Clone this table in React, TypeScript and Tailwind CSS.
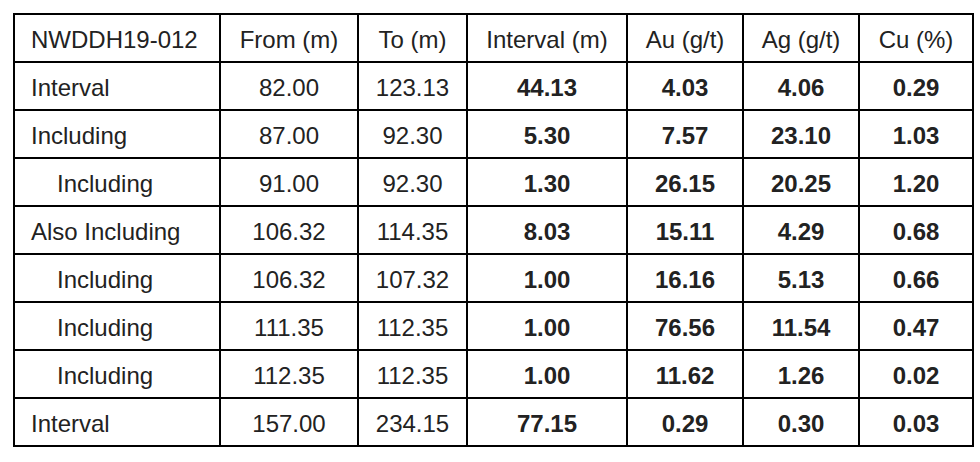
const rows: { label: string; indent?: boolean; from: string; to: string; interval: string; au: string; ag: string; cu: string }[] = [
  { label: "Interval", from: "82.00", to: "123.13", interval: "44.13", au: "4.03", ag: "4.06", cu: "0.29" },
  { label: "Including", from: "87.00", to: "92.30", interval: "5.30", au: "7.57", ag: "23.10", cu: "1.03" },
  { label: "Including", indent: true, from: "91.00", to: "92.30", interval: "1.30", au: "26.15", ag: "20.25", cu: "1.20" },
  { label: "Also Including", from: "106.32", to: "114.35", interval: "8.03", au: "15.11", ag: "4.29", cu: "0.68" },
  { label: "Including", indent: true, from: "106.32", to: "107.32", interval: "1.00", au: "16.16", ag: "5.13", cu: "0.66" },
  { label: "Including", indent: true, from: "111.35", to: "112.35", interval: "1.00", au: "76.56", ag: "11.54", cu: "0.47" },
  { label: "Including", indent: true, from: "112.35", to: "112.35", interval: "1.00", au: "11.62", ag: "1.26", cu: "0.02" },
  { label: "Interval", from: "157.00", to: "234.15", interval: "77.15", au: "0.29", ag: "0.30", cu: "0.03" },
];

const headers = ["From (m)", "To (m)", "Interval (m)", "Au (g/t)", "Ag (g/t)", "Cu (%)"];

export default function App() {
  const cell = "border-2 border-black text-center pt-[3px]";
  return (
    <div className="bg-white w-[980px] h-[462px] pt-[13px] pl-[13px] font-['Liberation_Sans',Arial,sans-serif] text-[24px] leading-[28px] text-[#222]">
      <table className="table-fixed border-collapse w-[959px]">
        <colgroup>
          <col className="w-[206px]" />
          <col className="w-[138px]" />
          <col className="w-[109px]" />
          <col className="w-[160px]" />
          <col className="w-[116px]" />
          <col className="w-[116px]" />
          <col className="w-[114px]" />
        </colgroup>
        <tbody>
          <tr className="h-[48px]">
            <td className="border-2 border-black pl-[16px] pt-[3px] text-left">NWDDH19-012</td>
            {headers.map((h) => (
              <td key={h} className={cell}>
                {h}
              </td>
            ))}
          </tr>
          {rows.map((r, i) => (
            <tr key={i} className="h-[48px]">
              <td className={`border-2 border-black text-left pt-[3px] ${r.indent ? "pl-[42px]" : "pl-[16px]"}`}>{r.label}</td>
              <td className={cell}>{r.from}</td>
              <td className={cell}>{r.to}</td>
              <td className={`${cell} font-bold`}>{r.interval}</td>
              <td className={`${cell} font-bold`}>{r.au}</td>
              <td className={`${cell} font-bold`}>{r.ag}</td>
              <td className={`${cell} font-bold`}>{r.cu}</td>
            </tr>
          ))}
        </tbody>
      </table>
    </div>
  );
}
